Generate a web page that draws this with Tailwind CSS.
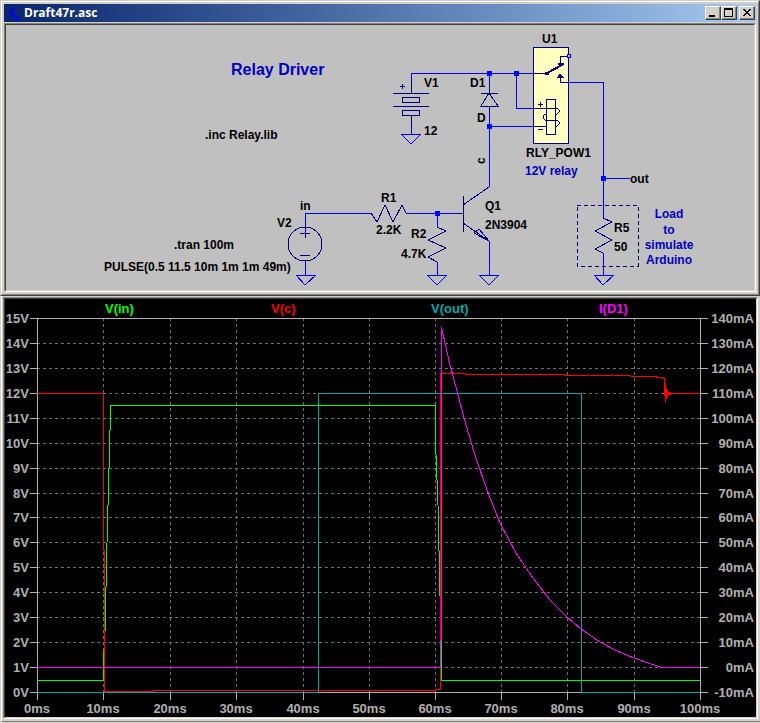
<!DOCTYPE html>
<html lang="en">
<head>
    <meta charset="UTF-8">
    <meta name="viewport" content="width=device-width, initial-scale=1.0">
    <title>Draft47r.asc</title>
    <script src="https://cdn.jsdelivr.net/npm/@tailwindcss/browser@4"></script>
</head>
<body class="flex flex-col bg-[#d4d0c8] font-['Liberation_Sans',Arial,sans-serif]">

    <!-- Schematic window -->
    <section class="border border-t-[#d4d0c8] border-l-[#d4d0c8] border-r-[#404040] border-b-[#404040]">
        <div class="border border-t-white border-l-white border-r-[#808080] border-b-[#808080] p-0.5">
            <header class="flex items-center h-[18px] mb-px pl-1 pr-px bg-linear-to-r from-[#0a246a] to-[#a6caf0]">
                <svg class="w-3 h-4 shrink-0" viewBox="0 0 12 16" fill="none" shape-rendering="crispEdges">
                    <path d="M0 7H3V3H5V5H6V4H7V3H8V2H9V1H10V0H11V1H10V2H9V3H8V4H7V5H6V6H5V9H6V10H7V11H8V12H9V11H10V14H11V16H9V15H6V14H7V12H6V11H5V12H3V8H0Z" fill="#0000ff" />
                </svg>
                <h1 class="flex-1 ml-1 text-[12px] leading-4 font-bold text-white font-['Open_Sans',sans-serif]">Draft47r.asc</h1>
                <div class="flex">
                    <button type="button" aria-label="Minimize" class="w-4 h-[14px] bg-[#d4d0c8] border border-t-white border-l-white border-r-[#404040] border-b-[#404040]">
                        <svg class="block w-full h-full" viewBox="0 0 14 12" shape-rendering="crispEdges"><path d="M13 0H14V12H0V11H13Z" fill="#808080" /><path d="M3 8H9V10H3Z" /></svg>
                    </button>
                    <button type="button" aria-label="Maximize" class="w-4 h-[14px] bg-[#d4d0c8] border border-t-white border-l-white border-r-[#404040] border-b-[#404040]">
                        <svg class="block w-full h-full" viewBox="0 0 14 12" shape-rendering="crispEdges"><path d="M13 0H14V12H0V11H13Z" fill="#808080" /><path fill-rule="evenodd" d="M2 1H11V10H2ZM3 3V9H10V3Z" /></svg>
                    </button>
                    <button type="button" aria-label="Close" class="w-4 h-[14px] ml-0.5 bg-[#d4d0c8] border border-t-white border-l-white border-r-[#404040] border-b-[#404040]">
                        <svg class="block w-full h-full" viewBox="0 0 14 12" shape-rendering="crispEdges"><path d="M13 0H14V12H0V11H13Z" fill="#808080" /><path d="M3 2H5V3H6V4H8V3H9V2H11V3H10V4H9V5H8V6H9V7H10V8H11V9H9V8H8V7H6V8H5V9H3V8H4V7H5V6H6V5H5V4H4V3H3Z" /></svg>
                    </button>
                </div>
            </header>
            <div class="border border-t-[#808080] border-l-[#808080] border-r-white border-b-white">
                <div class="border border-t-[#404040] border-l-[#404040] border-r-[#d4d0c8] border-b-[#d4d0c8] bg-[#c0c0c0]">
                    <svg class="block w-full h-auto" viewBox="6 25 748 265" role="img" aria-label="Relay driver schematic">
                        <!-- wires -->
                        <g fill="none" stroke="#0000ff" shape-rendering="crispEdges">
                            <path d="M411 80V73H533M489 73V86M516 73V108H533M489 113V187M489 126H533" />
                            <path d="M568 82H603V218M603 178H630M305 220V213H371M406 213H456M437 213V227M489 241V275" />
                            <path d="M411 127V134M305 268V275M437 262V275M603 253V275" />
                            <path d="M401 134H421L411 144Z" />
                            <path d="M296 275H316L305 285Z" />
                            <path d="M427 275H447L437 285Z" />
                            <path d="M479 275H499L489 285Z" />
                            <path d="M594 275H614L603 285Z" />
                        </g>
                        <!-- junctions -->
                        <g fill="#0000ff" shape-rendering="crispEdges">
                            <path d="M487 71h5v5h-5zM514 71h5v5h-5zM487 124h5v5h-5zM435 211h5v5h-5zM601 176h5v5h-5z" />
                        </g>
                        <!-- symbols -->
                        <g fill="none" stroke="#000080" shape-rendering="crispEdges">
                            <path d="M411 80V93M393 93H429M402 97H419V102H402ZM393 106H429M402 110H419V115H402ZM411 115V127M400 86H405M402 84V89" />
                            <path d="M489 86V93M481 93H498M489 93L481 106H498ZM489 106V113" />
                            <circle cx="305" cy="244" r="17" />
                            <path d="M305 220V227M300 233H310M305 228V238M300 255H310M305 261V268" />
                            <path d="M371 213L377 222L385 205L393 222L402 205L406 213" />
                            <path d="M437 227L446 231L428 240L446 248L428 257L437 262" />
                            <path d="M603 218L612 222L595 231L612 240L595 249L603 253" />
                            <path d="M456 213H463M463 196V232M489 187L463 205M463 223L489 241L474 233L479 229L489 241" />
                            <path d="M577 205H638V266H577Z" stroke-dasharray="4 3" />
                        </g>
                        <!-- relay -->
                        <g fill="none" stroke="#000080" shape-rendering="crispEdges">
                            <path d="M533 47H568V143H533Z" fill="#ffffc0" />
                            <path d="M533 73H547M568 56H560V64M568 82H560V74" />
                            <path d="M558 63H563L560 66ZM558 77H563L560 74Z" fill="#000080" />
                            <path d="M547 73L564 64" stroke-width="2" />
                            <path d="M545 73H549" stroke-width="3" />
                            <path d="M546 99H555V134H546ZM533 108H555M546 120H555M533 126H546M538 104H543M540 102V107M538 129H543" />
                            <path d="M555 108H557L559 110V112L557 114H555M546 114H545L543 116V118L545 120H546M555 120H557L559 122V124L557 126H555" />
                            <path d="M567 54H570V57H567Z" fill="#c0c0ff" stroke="#0000ff" />
                        </g>
                        <!-- labels -->
                        <g class="text-[12px] font-bold" fill="#000000">
                            <text x="424" y="87">V1</text>
                            <text x="424" y="135">12</text>
                            <text x="470" y="87">D1</text>
                            <text x="477" y="122">D</text>
                            <text transform="translate(485 164) rotate(-90)">c</text>
                            <text x="542" y="43">U1</text>
                            <text x="526" y="157">RLY_POW1</text>
                            <text x="630" y="183">out</text>
                            <text x="300" y="210">in</text>
                            <text x="277" y="227">V2</text>
                            <text x="381" y="202">R1</text>
                            <text x="376" y="234">2.2K</text>
                            <text x="411" y="238">R2</text>
                            <text x="401" y="258">4.7K</text>
                            <text x="485" y="210">Q1</text>
                            <text x="485" y="229">2N3904</text>
                            <text x="614" y="232">R5</text>
                            <text x="614" y="251">50</text>
                            <text x="205" y="139">.inc Relay.lib</text>
                            <text x="174" y="249">.tran 100m</text>
                            <text x="104" y="271">PULSE(0.5 11.5 10m 1m 1m 49m)</text>
                        </g>
                        <!-- comments -->
                        <g class="font-bold" fill="#0000c0">
                            <text x="231" y="75" class="text-[16px]">Relay Driver</text>
                            <text x="525" y="175" class="text-[12px]">12V relay</text>
                            <g class="text-[12px]" text-anchor="middle">
                                <text x="669" y="218">Load</text>
                                <text x="669" y="234">to</text>
                                <text x="669" y="249">simulate</text>
                                <text x="669" y="264">Arduino</text>
                            </g>
                        </g>
                    </svg>
                </div>
            </div>
        </div>
    </section>

    <!-- Waveform window -->
    <section class="border-l border-[#d4d0c8]">
        <div class="border-l border-l-white border-b border-b-[#808080] pt-px pl-px pr-0.5 pb-0.5">
            <div class="border border-t-[#808080] border-l-[#808080] border-r-white border-b-white">
                <div class="border border-t-[#404040] border-l-[#404040] border-r-[#d4d0c8] border-b-[#d4d0c8] bg-black">
                    <svg class="block w-full h-auto" viewBox="5 299 751 418" role="img" aria-label="Waveforms of V(in), V(c), V(out) and I(D1)">
                        <!-- grid -->
                        <g fill="none" stroke="#707070" stroke-dasharray="3 3" shape-rendering="crispEdges">
                            <path d="M37 343H700M37 368H700M37 393H700M37 418H700M37 443H700M37 468H700M37 493H700M37 517H700M37 542H700M37 567H700M37 592H700M37 617H700M37 642H700M37 667H700" />
                            <path d="M103 318V692M170 318V692M236 318V692M303 318V692M369 318V692M435 318V692M501 318V692M567 318V692M634 318V692" />
                        </g>
                        <!-- axes -->
                        <g fill="none" stroke="#b0b0b0" shape-rendering="crispEdges">
                            <path d="M30 318H708M30 692H708M37 318V700M700 318V700" />
                            <path d="M30 343H37M30 368H37M30 393H37M30 418H37M30 443H37M30 468H37M30 493H37M30 517H37M30 542H37M30 567H37M30 592H37M30 617H37M30 642H37M30 667H37" />
                            <path d="M700 343H708M700 368H708M700 393H708M700 418H708M700 443H708M700 468H708M700 493H708M700 517H708M700 542H708M700 567H708M700 592H708M700 617H708M700 642H708M700 667H708" />
                            <path d="M103 692V700M170 692V700M236 692V700M303 692V700M369 692V700M435 692V700M501 692V700M567 692V700M634 692V700" />
                        </g>
                        <!-- traces -->
                        <g fill="none" shape-rendering="crispEdges">
                            <path stroke="#00ff00" d="M37 680H103V671L105 632L107 543L110 430V405H435L436 455L438 505L441 640V680H700" />
                            <path stroke="#ff0000" d="M37 393H103V550H104V691H153V690H435V689H440V375L441 373H465V374H565V375H630V376H656V377H662V378H664V393H700" />
                            <path fill="#ff0000" d="M664 378H665V383H666V388H667V390H668V392H671V395H668V397H667V399H666V403H665V396H664Z" />
                            <path stroke="#00a8a8" d="M37 692H318V393H581V692H700" />
                            <path stroke="#ff00ff" d="M37 667H440V640H441V327L443 334L450 365L457 391L464 418L474 452L487 490L500 523L516 553L533 578L550 600L567 617L581 629L600 642L617 651L634 658L648 663L660 667H700" />
                        </g>
                        <!-- trace names -->
                        <g class="text-[13px] font-bold">
                            <text x="105" y="313" fill="#00ff00">V(in)</text>
                            <text x="271" y="313" fill="#ff0000">V(c)</text>
                            <text x="431" y="313" fill="#00a8a8">V(out)</text>
                            <text x="599" y="313" fill="#ff00ff">I(D1)</text>
                        </g>
                        <!-- voltage scale -->
                        <g class="text-[13px] font-bold" fill="#b0b0b0" text-anchor="end">
                            <text x="29" y="323">15V</text>
                            <text x="29" y="348">14V</text>
                            <text x="29" y="373">13V</text>
                            <text x="29" y="398">12V</text>
                            <text x="29" y="423">11V</text>
                            <text x="29" y="448">10V</text>
                            <text x="29" y="473">9V</text>
                            <text x="29" y="498">8V</text>
                            <text x="29" y="522">7V</text>
                            <text x="29" y="547">6V</text>
                            <text x="29" y="572">5V</text>
                            <text x="29" y="597">4V</text>
                            <text x="29" y="622">3V</text>
                            <text x="29" y="647">2V</text>
                            <text x="29" y="672">1V</text>
                            <text x="29" y="697">0V</text>
                        </g>
                        <!-- current scale -->
                        <g class="text-[13px] font-bold" fill="#b0b0b0" text-anchor="end">
                            <text x="754" y="323">140mA</text>
                            <text x="754" y="348">130mA</text>
                            <text x="754" y="373">120mA</text>
                            <text x="754" y="398">110mA</text>
                            <text x="754" y="423">100mA</text>
                            <text x="754" y="448">90mA</text>
                            <text x="754" y="473">80mA</text>
                            <text x="754" y="498">70mA</text>
                            <text x="754" y="522">60mA</text>
                            <text x="754" y="547">50mA</text>
                            <text x="754" y="572">40mA</text>
                            <text x="754" y="597">30mA</text>
                            <text x="754" y="622">20mA</text>
                            <text x="754" y="647">10mA</text>
                            <text x="754" y="672">0mA</text>
                            <text x="754" y="697">-10mA</text>
                        </g>
                        <!-- time scale -->
                        <g class="text-[13px] font-bold" fill="#b0b0b0" text-anchor="middle">
                            <text x="37" y="713">0ms</text>
                            <text x="103" y="713">10ms</text>
                            <text x="170" y="713">20ms</text>
                            <text x="236" y="713">30ms</text>
                            <text x="303" y="713">40ms</text>
                            <text x="369" y="713">50ms</text>
                            <text x="435" y="713">60ms</text>
                            <text x="501" y="713">70ms</text>
                            <text x="567" y="713">80ms</text>
                            <text x="634" y="713">90ms</text>
                            <text x="700" y="713">100ms</text>
                        </g>
                    </svg>
                </div>
            </div>
        </div>
    </section>

</body>
</html>
